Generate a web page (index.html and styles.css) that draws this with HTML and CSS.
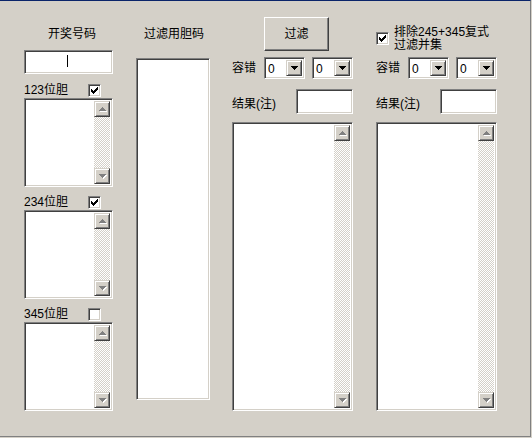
FILE: index.html
```html
<!DOCTYPE html>
<html lang="zh-CN">
<head>
<meta charset="utf-8">
<title>过滤</title>
<link rel="stylesheet" href="styles.css">
</head>
<body>
<div class="window">
  <div class="col col-a">
    <div class="caption caption-a">开奖号码</div>
    <div class="sunken code-input"><span class="caret"></span></div>

    <div class="check-row first">
      <span class="check-label">123位胆</span>
      <span class="sunken checkbox"><svg class="tick" width="7" height="7" viewBox="0 0 7 7"><path d="M6 0h1v1h-1z M5 1h2v1h-2z M0 2h1v1h-1z M4 2h3v1h-3z M0 3h2v1h-2z M3 3h3v1h-3z M0 4h5v1h-5z M1 5h3v1h-3z M2 6h1v1h-1z"/></svg></span>
    </div>
    <div class="sunken listbox small">
      <div class="list-body"></div>
      <div class="vscroll">
        <div class="sbtn"><svg width="8" height="5" viewBox="0 0 8 5"><path class="sh" d="M4 1h1v1h1v1h1v1h1v1H1V4h1V3h1V2h1z"/><path class="ar" d="M3 0h1v1h1v1h1v1h1v1H0V3h1V2h1V1h1z"/></svg></div>
        <div class="track"></div>
        <div class="sbtn"><svg width="8" height="5" viewBox="0 0 8 5"><path class="sh" d="M1 1h7v1h-1v1h-1v1h-1v1h-1v-1h-1v-1h-1v-1h-1z"/><path class="ar" d="M0 0h7v1h-1v1h-1v1h-1v1h-1v-1h-1v-1h-1v-1h-1z"/></svg></div>
      </div>
    </div>

    <div class="check-row">
      <span class="check-label">234位胆</span>
      <span class="sunken checkbox"><svg class="tick" width="7" height="7" viewBox="0 0 7 7"><path d="M6 0h1v1h-1z M5 1h2v1h-2z M0 2h1v1h-1z M4 2h3v1h-3z M0 3h2v1h-2z M3 3h3v1h-3z M0 4h5v1h-5z M1 5h3v1h-3z M2 6h1v1h-1z"/></svg></span>
    </div>
    <div class="sunken listbox small">
      <div class="list-body"></div>
      <div class="vscroll">
        <div class="sbtn"><svg width="8" height="5" viewBox="0 0 8 5"><path class="sh" d="M4 1h1v1h1v1h1v1h1v1H1V4h1V3h1V2h1z"/><path class="ar" d="M3 0h1v1h1v1h1v1h1v1H0V3h1V2h1V1h1z"/></svg></div>
        <div class="track"></div>
        <div class="sbtn"><svg width="8" height="5" viewBox="0 0 8 5"><path class="sh" d="M1 1h7v1h-1v1h-1v1h-1v1h-1v-1h-1v-1h-1v-1h-1z"/><path class="ar" d="M0 0h7v1h-1v1h-1v1h-1v1h-1v-1h-1v-1h-1v-1h-1z"/></svg></div>
      </div>
    </div>

    <div class="check-row">
      <span class="check-label">345位胆</span>
      <span class="sunken checkbox"></span>
    </div>
    <div class="sunken listbox small">
      <div class="list-body"></div>
      <div class="vscroll">
        <div class="sbtn"><svg width="8" height="5" viewBox="0 0 8 5"><path class="sh" d="M4 1h1v1h1v1h1v1h1v1H1V4h1V3h1V2h1z"/><path class="ar" d="M3 0h1v1h1v1h1v1h1v1H0V3h1V2h1V1h1z"/></svg></div>
        <div class="track"></div>
        <div class="sbtn"><svg width="8" height="5" viewBox="0 0 8 5"><path class="sh" d="M1 1h7v1h-1v1h-1v1h-1v1h-1v-1h-1v-1h-1v-1h-1z"/><path class="ar" d="M0 0h7v1h-1v1h-1v1h-1v1h-1v-1h-1v-1h-1v-1h-1z"/></svg></div>
      </div>
    </div>
  </div>

  <div class="col col-b">
    <div class="caption caption-b">过滤用胆码</div>
    <div class="sunken filter-box"></div>
  </div>

  <div class="col col-c">
    <div class="push-btn">过滤</div>
    <div class="combo-row">
      <span class="row-label">容错</span>
      <div class="sunken combo"><span class="combo-val">0</span><span class="dd"><svg width="7" height="4" viewBox="0 0 7 4"><path d="M0 0h7v1h-1v1h-1v1h-1v1h-1v-1h-1v-1h-1v-1h-1z"/></svg></span></div>
      <div class="sunken combo"><span class="combo-val">0</span><span class="dd"><svg width="7" height="4" viewBox="0 0 7 4"><path d="M0 0h7v1h-1v1h-1v1h-1v1h-1v-1h-1v-1h-1v-1h-1z"/></svg></span></div>
    </div>
    <div class="result-row">
      <span class="result-label">结果(注)</span>
      <div class="sunken result-box"></div>
    </div>
    <div class="sunken listbox big">
      <div class="list-body"></div>
      <div class="vscroll">
        <div class="sbtn"><svg width="8" height="5" viewBox="0 0 8 5"><path class="sh" d="M4 1h1v1h1v1h1v1h1v1H1V4h1V3h1V2h1z"/><path class="ar" d="M3 0h1v1h1v1h1v1h1v1H0V3h1V2h1V1h1z"/></svg></div>
        <div class="track"></div>
        <div class="sbtn"><svg width="8" height="5" viewBox="0 0 8 5"><path class="sh" d="M1 1h7v1h-1v1h-1v1h-1v1h-1v-1h-1v-1h-1v-1h-1z"/><path class="ar" d="M0 0h7v1h-1v1h-1v1h-1v1h-1v-1h-1v-1h-1v-1h-1z"/></svg></div>
      </div>
    </div>
  </div>

  <div class="col col-d">
    <div class="option-row">
      <span class="sunken checkbox"><svg class="tick" width="7" height="7" viewBox="0 0 7 7"><path d="M6 0h1v1h-1z M5 1h2v1h-2z M0 2h1v1h-1z M4 2h3v1h-3z M0 3h2v1h-2z M3 3h3v1h-3z M0 4h5v1h-5z M1 5h3v1h-3z M2 6h1v1h-1z"/></svg></span>
      <span class="option-text">排除245+345复式<br>过滤并集</span>
    </div>
    <div class="combo-row tight">
      <span class="row-label">容错</span>
      <div class="sunken combo"><span class="combo-val">0</span><span class="dd"><svg width="7" height="4" viewBox="0 0 7 4"><path d="M0 0h7v1h-1v1h-1v1h-1v1h-1v-1h-1v-1h-1v-1h-1z"/></svg></span></div>
      <div class="sunken combo"><span class="combo-val">0</span><span class="dd"><svg width="7" height="4" viewBox="0 0 7 4"><path d="M0 0h7v1h-1v1h-1v1h-1v1h-1v-1h-1v-1h-1v-1h-1z"/></svg></span></div>
    </div>
    <div class="result-row">
      <span class="result-label">结果(注)</span>
      <div class="sunken result-box"></div>
    </div>
    <div class="sunken listbox big">
      <div class="list-body"></div>
      <div class="vscroll">
        <div class="sbtn"><svg width="8" height="5" viewBox="0 0 8 5"><path class="sh" d="M4 1h1v1h1v1h1v1h1v1H1V4h1V3h1V2h1z"/><path class="ar" d="M3 0h1v1h1v1h1v1h1v1H0V3h1V2h1V1h1z"/></svg></div>
        <div class="track"></div>
        <div class="sbtn"><svg width="8" height="5" viewBox="0 0 8 5"><path class="sh" d="M1 1h7v1h-1v1h-1v1h-1v1h-1v-1h-1v-1h-1v-1h-1z"/><path class="ar" d="M0 0h7v1h-1v1h-1v1h-1v1h-1v-1h-1v-1h-1v-1h-1z"/></svg></div>
      </div>
    </div>
  </div>
</div>
</body>
</html>
```

FILE: styles.css
```css
* {
  box-sizing: border-box;
}

html,
body {
  margin: 0;
  padding: 0;
}

body {
  width: 532px;
  height: 438px;
  overflow: hidden;
  background: #D4D0C8;
  color: #000;
  font-family: "Liberation Sans", "Noto Sans CJK SC", sans-serif;
  font-size: 12px;
}

.window {
  display: flex;
  align-items: flex-start;
  width: 531px;
  height: 437px;
  padding-left: 24px;
  border-top: 1px solid #0A246A;
  border-right: 1px solid #808080;
  border-bottom: 1px solid #808080;
}

.col {
  display: flex;
  flex-direction: column;
  flex: none;
}

.col-a { width: 89px; }
.col-b { width: 74px; margin-left: 23px; }
.col-c { width: 121px; margin-left: 22px; }
.col-d { width: 121px; margin-left: 23px; }

/* 3D borders */
.sunken {
  background: #fff;
  border: 1px solid;
  border-color: #808080 #fff #fff #808080;
  box-shadow: inset 1px 1px #404040, inset -1px -1px #D4D0C8;
}

.caption {
  margin-top: 26px;
  line-height: 14px;
  height: 14px;
  white-space: nowrap;
}

.caption-a { padding-left: 24px; }
.caption-b { padding-left: 8px; }

.code-input {
  margin-top: 9px;
  height: 24px;
  padding: 4px 0 0 42px;
}

.caret {
  display: block;
  width: 1px;
  height: 12px;
  background: #000;
}

.check-row {
  display: flex;
  align-items: center;
  height: 13px;
  margin-top: 9px;
}

.check-row.first {
  margin-top: 10px;
}

.check-label {
  width: 64px;
  line-height: 13px;
  white-space: nowrap;
}

.checkbox {
  display: flex;
  flex: none;
  width: 13px;
  height: 13px;
  padding: 2px 0 0 2px;
}

.tick {
  display: block;
  fill: #000;
  shape-rendering: crispEdges;
}

.listbox {
  display: flex;
  padding: 2px;
  margin-top: 1px;
}

.listbox.small {
  height: 89px;
}

.listbox.big {
  height: 289px;
  margin-top: 8px;
}

.list-body {
  flex: 1;
}

.vscroll {
  display: flex;
  flex-direction: column;
  width: 16px;
  flex: none;
}

.sbtn {
  display: flex;
  align-items: center;
  justify-content: center;
  width: 16px;
  height: 16px;
  flex: none;
  background: #D4D0C8;
  border: 1px solid;
  border-color: #D4D0C8 #404040 #404040 #D4D0C8;
  box-shadow: inset 1px 1px #fff, inset -1px -1px #808080;
}

.sbtn svg {
  display: block;
  shape-rendering: crispEdges;
  margin: 1px 0 0 1px;
}

.sbtn .ar { fill: #808080; }
.sbtn .sh { fill: #fff; }

.track {
  flex: 1;
  background-color: #D4D0C8;
  background-image: repeating-conic-gradient(#fff 0 25%, #D4D0C8 0 50%);
  background-size: 2px 2px;
}

.filter-box {
  margin-top: 17px;
  height: 342px;
}

.push-btn {
  display: flex;
  align-items: center;
  justify-content: center;
  width: 65px;
  height: 34px;
  margin: 16px 0 0 32px;
  background: #D4D0C8;
  border: 1px solid;
  border-color: #fff #404040 #404040 #fff;
  box-shadow: inset -1px -1px #808080, inset 1px 1px #D4D0C8;
  line-height: 14px;
}

.combo-row {
  display: flex;
  align-items: center;
  height: 22px;
  margin-top: 6px;
}

.combo-row.tight {
  margin-top: 4px;
}

.row-label {
  width: 32px;
  line-height: 14px;
  flex: none;
}

.combo {
  display: flex;
  align-items: stretch;
  width: 41px;
  height: 22px;
  padding: 2px;
  flex: none;
}

.combo + .combo {
  margin-left: 7px;
}

.combo-val {
  flex: 1;
  padding-left: 1px;
  line-height: 18px;
}

.dd {
  display: flex;
  align-items: center;
  justify-content: center;
  width: 16px;
  flex: none;
  background: #D4D0C8;
  border: 1px solid;
  border-color: #D4D0C8 #404040 #404040 #D4D0C8;
  box-shadow: inset 1px 1px #fff, inset -1px -1px #808080;
}

.dd svg {
  display: block;
  fill: #000;
  shape-rendering: crispEdges;
}

.result-row {
  display: flex;
  align-items: center;
  height: 25px;
  margin-top: 10px;
}

.result-label {
  width: 64px;
  flex: none;
  line-height: 14px;
  margin-top: 4px;
  white-space: nowrap;
}

.result-box {
  width: 57px;
  height: 25px;
  flex: none;
}

.option-row {
  display: flex;
  align-items: flex-start;
  margin-top: 25px;
  height: 27px;
}

.option-row .checkbox {
  margin-top: 6px;
}

.option-text {
  margin-left: 5px;
  line-height: 13px;
  white-space: nowrap;
}
```
